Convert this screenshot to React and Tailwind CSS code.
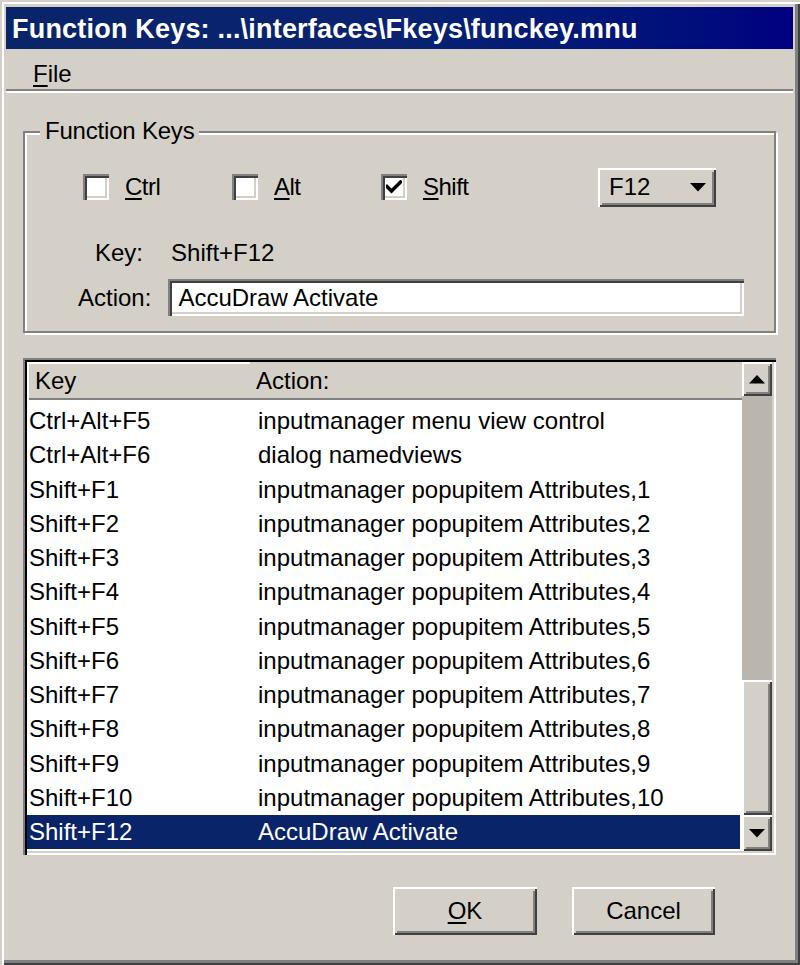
import React from "react";

const raised =
  "shadow-[inset_2px_2px_0_#ffffff,inset_-2px_-2px_0_#404040,inset_4px_4px_0_#d4d0c8,inset_-4px_-4px_0_#808080]";
const sunken =
  "shadow-[inset_2px_2px_0_#808080,inset_4px_4px_0_#404040,inset_-2px_-2px_0_#ffffff,inset_-4px_-4px_0_#d4d0c8]";

function Tri({ down = true, className = "" }) {
  return (
    <svg width="16" height="9" viewBox="0 0 16 9" className={className}>
      {down ? (
        <polygon points="0,0 16,0 8,8.5" fill="#000" />
      ) : (
        <polygon points="0,8.5 16,8.5 8,0" fill="#000" />
      )}
    </svg>
  );
}

function Check({ u, rest, checked }) {
  return (
    <div className="w-[149px] flex items-center">
      <span className={`w-[26px] h-[26px] bg-white flex items-center justify-center ${sunken}`}>
        {checked && (
          <svg width="16" height="14" viewBox="0 0 16 14">
            <path d="M1 6.5 L5.5 11 L14.5 2" stroke="#000" strokeWidth="3.4" fill="none" strokeLinejoin="miter" strokeLinecap="square" />
          </svg>
        )}
      </span>
      <span className="ml-[16px] text-[24px] tracking-[-0.5px]">
        <span className="underline decoration-2 underline-offset-[3px]">{u}</span>
        {rest}
      </span>
    </div>
  );
}

const rows = [
  ["Ctrl+Alt+F5", "inputmanager menu view control"],
  ["Ctrl+Alt+F6", "dialog namedviews"],
  ["Shift+F1", "inputmanager popupitem Attributes,1"],
  ["Shift+F2", "inputmanager popupitem Attributes,2"],
  ["Shift+F3", "inputmanager popupitem Attributes,3"],
  ["Shift+F4", "inputmanager popupitem Attributes,4"],
  ["Shift+F5", "inputmanager popupitem Attributes,5"],
  ["Shift+F6", "inputmanager popupitem Attributes,6"],
  ["Shift+F7", "inputmanager popupitem Attributes,7"],
  ["Shift+F8", "inputmanager popupitem Attributes,8"],
  ["Shift+F9", "inputmanager popupitem Attributes,9"],
  ["Shift+F10", "inputmanager popupitem Attributes,10"],
  ["Shift+F12", "AccuDraw Activate", true],
];

export default function App() {
  return (
    <div
      className="w-[800px] h-[965px] bg-[#d4d0c8] text-black overflow-hidden pt-[7px] pl-[6px] pr-[7px] shadow-[inset_2px_2px_0_#d4d0c8,inset_4px_4px_0_#ffffff,inset_-2px_-2px_0_#404040,inset_-5px_-5px_0_#808080]"
      style={{ fontFamily: '"Liberation Sans", Arial, sans-serif' }}
    >
      {/* Title bar */}
      <div className="h-[42px] bg-gradient-to-r from-[#0a246a] via-[#0a2270] to-[#000080] flex items-center pl-[6px] pt-[2px]">
        <span className="text-white font-bold text-[27px] tracking-[0.2px] leading-none">
          Function Keys: ...\interfaces\Fkeys\funckey.mnu
        </span>
      </div>
      {/* Menu bar */}
      <div className="h-[40px] flex items-center pl-[27px] pt-[9px] text-[24px]">
        <span>
          <span className="underline decoration-2 underline-offset-[3px]">F</span>ile
        </span>
      </div>
      <div className="h-[2px] bg-[#808080]" />
      <div className="h-[2px] bg-white" />

      <div className="px-[17px]">
        {/* Group box */}
        <div className="relative mt-[38px] h-[202px] border-2 border-[#808080] shadow-[inset_2px_2px_0_#ffffff,2px_2px_0_#ffffff]">
          <span className="absolute -top-[15px] left-[15px] px-[5px] bg-[#d4d0c8] text-[24px] leading-[26px] tracking-[-0.2px]">
            Function Keys
          </span>
          <div className="flex items-center mt-[34px] ml-[58px] h-[40px]">
            <Check u="C" rest="trl" />
            <Check u="A" rest="lt" />
            <Check u="S" rest="hift" checked />
            <div className={`ml-[68px] w-[118px] h-[39px] flex items-center justify-between pl-[11px] pr-[10px] ${raised}`}>
              <span className="text-[24px]">F12</span>
              <Tri className="mt-[1px]" />
            </div>
          </div>
          <div className="flex items-center h-[26px] mt-[33px] text-[24px]">
            <span className="ml-[70px]">Key:</span>
            <span className="ml-[28px]">Shift+F12</span>
          </div>
          <div className="flex items-center mt-[13px] text-[24px]">
            <span className="ml-[53px]">Action:</span>
            <div className={`ml-[17px] w-[576px] h-[37px] bg-white flex items-center pl-[10px] ${sunken}`}>
              AccuDraw Activate
            </div>
          </div>
        </div>

        {/* List */}
        <div className="mt-[25px] h-[497px] p-[4px] shadow-[inset_2px_2px_0_#808080,inset_4px_4px_0_#000000,inset_-2px_-2px_0_#ffffff,inset_-4px_-4px_0_#d4d0c8] flex">
          <div className="flex-1 flex flex-col bg-white overflow-hidden">
            <div className="h-[38px] flex shrink-0 bg-[#d4d0c8] text-[24px]">
              <div className="w-[223px] flex items-center pl-[8px] shadow-[inset_2px_2px_0_#ffffff,inset_0_-2px_0_#808080]">Key</div>
              <div className="flex-1 flex items-center pl-[6px] shadow-[inset_0_-2px_0_#808080]">Action:</div>
            </div>
            <div className="pt-[4px] pr-[2px]">
              {rows.map(([k, a, sel]) => (
                <div
                  key={k}
                  className={`h-[34.25px] flex items-center text-[24px] ${sel ? "bg-[#0a246a] text-white" : ""}`}
                >
                  <span className="w-[231px] pl-[2px]">{k}</span>
                  <span>{a}</span>
                </div>
              ))}
            </div>
          </div>
          {/* Scrollbar */}
          <div className="w-[30px] flex flex-col bg-[#bab6ae]">
            <div className={`h-[34px] shrink-0 bg-[#d4d0c8] flex items-center justify-center ${raised}`}>
              <Tri down={false} />
            </div>
            <div className="h-[284px]" />
            <div className={`flex-1 bg-[#d4d0c8] ${raised}`} />
            <div className={`h-[36px] shrink-0 bg-[#d4d0c8] flex items-center justify-center ${raised}`}>
              <Tri />
            </div>
          </div>
        </div>

        {/* Buttons */}
        <div className="flex mt-[32px] ml-[370px] gap-[35px]">
          <div className={`w-[144px] h-[48px] flex items-center justify-center text-[24px] ${raised}`}>
            <span>
              <span className="underline decoration-2 underline-offset-[3px]">O</span>K
            </span>
          </div>
          <div className={`w-[143px] h-[48px] flex items-center justify-center text-[24px] ${raised}`}>
            Cancel
          </div>
        </div>
      </div>
    </div>
  );
}
